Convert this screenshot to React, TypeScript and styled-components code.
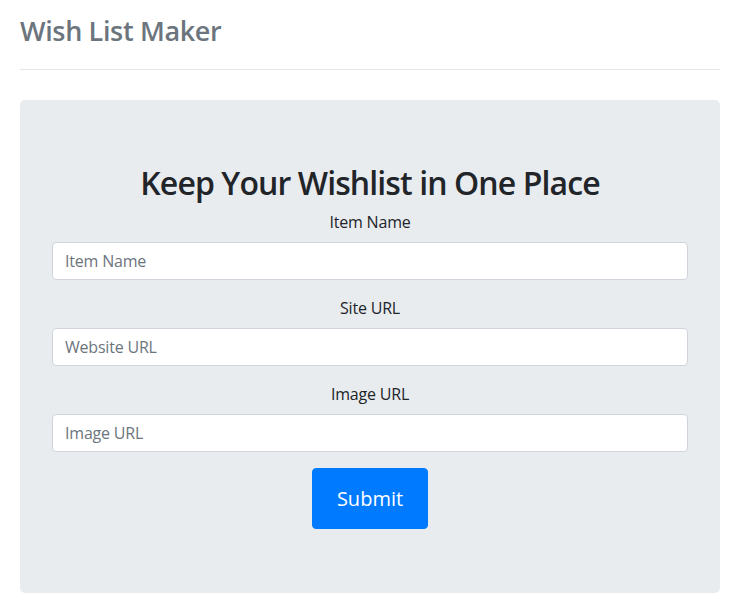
import React from "react";
import styled, { createGlobalStyle } from "styled-components";

const Global = createGlobalStyle`
  body {
    margin: 0;
    font-family: "Open Sans", "Noto Sans", sans-serif;
    color: #212529;
    background: #fff;
  }
  * { box-sizing: border-box; }
`;

const Container = styled.div`
  padding: 14px 16px 0 20px;
`;

const Title = styled.h3`
  margin: 0;
  font-size: 27px;
  line-height: 33.6px;
  font-weight: 600;
  letter-spacing: -0.35px;
  color: #6c757d;
`;

const Rule = styled.hr`
  margin: 21px 0 30px;
  border: 0;
  border-top: 1px solid #e3e5e8;
`;

const Jumbotron = styled.div`
  background: #e9ecef;
  border-radius: 5px;
  padding: 64px 32px;
  text-align: center;
`;

const Heading = styled.h2`
  margin: 0 0 8px;
  font-size: 32px;
  line-height: 38.4px;
  font-weight: 600;
  letter-spacing: -0.9px;
`;

const Group = styled.div`
  margin-bottom: 16px;
`;

const Label = styled.label`
  display: block;
  font-size: 16px;
  line-height: 24px;
  margin-bottom: 8px;
  letter-spacing: -0.2px;
`;

const Input = styled.input`
  display: block;
  width: 100%;
  height: 38px;
  padding: 6px 12px;
  font-family: inherit;
  font-size: 16px;
  line-height: 24px;
  letter-spacing: -0.2px;
  color: #495057;
  background: #fff;
  border: 1px solid #ced4da;
  border-radius: 4px;
  &::placeholder { color: #6c757d; }
`;

const Button = styled.button`
  font-family: inherit;
  font-size: 20px;
  line-height: 30px;
  padding: 14.5px 24px;
  color: #fff;
  background: #007bff;
  border: 1px solid #007bff;
  border-radius: 4px;
  cursor: pointer;
`;

const fields = [
  { label: "Item Name", placeholder: "Item Name" },
  { label: "Site URL", placeholder: "Website URL" },
  { label: "Image URL", placeholder: "Image URL" },
];

export default function App() {
  return (
    <Container>
      <Global />
      <Title>Wish List Maker</Title>
      <Rule />
      <Jumbotron>
        <Heading>Keep Your Wishlist in One Place</Heading>
        {fields.map((f) => (
          <Group key={f.label}>
            <Label>{f.label}</Label>
            <Input placeholder={f.placeholder} />
          </Group>
        ))}
        <Button>Submit</Button>
      </Jumbotron>
    </Container>
  );
}
